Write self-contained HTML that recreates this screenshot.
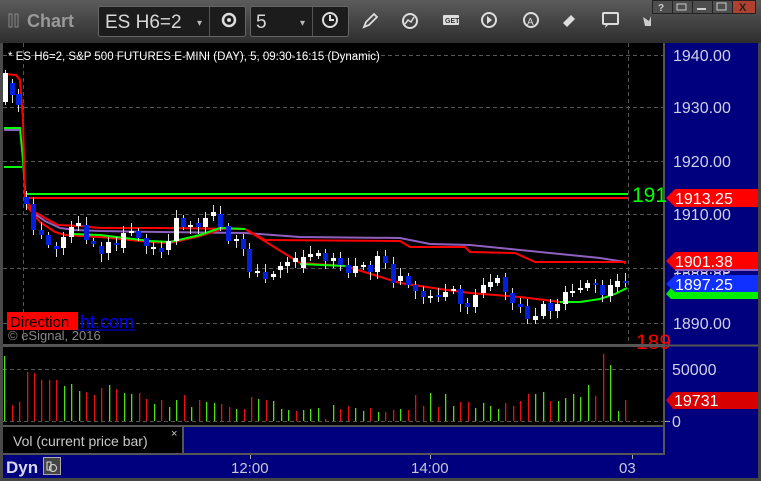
<!DOCTYPE html>
<html><head><meta charset="utf-8"><style>
html,body{margin:0;padding:0;background:#3a3a3a;width:761px;height:481px;overflow:hidden;font-family:"Liberation Sans",sans-serif}
svg{display:block}
</style></head><body>
<svg id="s" width="761" height="481" xmlns="http://www.w3.org/2000/svg" font-family="Liberation Sans, sans-serif">
<defs>
<linearGradient id="tb" x1="0" y1="0" x2="0" y2="1"><stop offset="0" stop-color="#5c5c5c"/><stop offset="0.5" stop-color="#444"/><stop offset="1" stop-color="#2e2e2e"/></linearGradient>
</defs>
<rect x="0" y="0" width="761" height="481" fill="#4a4a4a"/>
<rect x="0" y="0" width="761" height="43" fill="url(#tb)"/>
<rect x="9" y="14" width="3" height="13" fill="none" stroke="#888" stroke-width="1"/>
<rect x="15" y="14" width="3" height="13" fill="none" stroke="#888" stroke-width="1"/>
<text x="27" y="27" font-size="18" font-weight="bold" fill="#9a9a9a">Chart</text>
<rect x="98.5" y="6.5" width="147" height="30" rx="2" fill="#1c1c1c" stroke="#666"/>
<line x1="209.5" y1="7" x2="209.5" y2="36" stroke="#555"/>
<text x="105" y="28" font-size="19" fill="#d8d8d8">ES H6=2</text>
<text x="197" y="26" font-size="10" fill="#bbb">▾</text>
<circle cx="229" cy="20" r="6" fill="none" stroke="#ddd" stroke-width="2.5"/><circle cx="229" cy="20" r="2" fill="#ddd"/>
<rect x="250.5" y="6.5" width="98" height="30" rx="2" fill="#1c1c1c" stroke="#666"/>
<line x1="312.5" y1="7" x2="312.5" y2="36" stroke="#555"/>
<text x="256" y="28" font-size="19" fill="#d8d8d8">5</text>
<text x="300" y="26" font-size="10" fill="#bbb">▾</text>
<circle cx="330" cy="20" r="7" fill="none" stroke="#ddd" stroke-width="2"/><path d="M330 15v5h4" stroke="#ddd" stroke-width="2" fill="none"/>
<path d="M364 27l2-5 8-8 3 3-8 8z" fill="none" stroke="#ddd" stroke-width="1.8"/>
<circle cx="410" cy="21" r="7" fill="none" stroke="#ddd" stroke-width="2"/><path d="M405 24l3-4 3 2 3-5" stroke="#ddd" stroke-width="1.5" fill="none"/>
<rect x="443" y="15" width="16" height="10" rx="1" fill="#ddd"/><text x="445" y="23" font-size="7" font-weight="bold" fill="#333">GET</text>
<circle cx="489" cy="20" r="7" fill="none" stroke="#ddd" stroke-width="2"/><path d="M487 16v8l5-4z" fill="#ddd"/>
<circle cx="531" cy="20" r="7" fill="none" stroke="#ddd" stroke-width="2"/><text x="527" y="25" font-size="10" fill="#ddd">A</text>
<path d="M563 23l8-8 4 4-8 8z" fill="#ddd"/>
<rect x="603" y="13" width="15" height="11" rx="1" fill="none" stroke="#ddd" stroke-width="2"/><path d="M606 24l-1 4 4-4" fill="#ddd"/>
<path d="M643 17l6 4 2-5v10h-6z" fill="#ccc"/>
<rect x="652.5" y="0.5" width="20" height="13" fill="#4e4e4e" stroke="#222"/><text x="658" y="11" font-size="10" font-weight="bold" fill="#ccc">?</text>
<rect x="672.5" y="0.5" width="20" height="13" fill="#4e4e4e" stroke="#222"/><rect x="677" y="4" width="9" height="6" fill="none" stroke="#ccc"/>
<rect x="692.5" y="0.5" width="20" height="13" fill="#4e4e4e" stroke="#222"/><rect x="697" y="8" width="9" height="2" fill="#ccc"/>
<rect x="712.5" y="0.5" width="20" height="13" fill="#4e4e4e" stroke="#222"/><rect x="717" y="3" width="9" height="7" fill="none" stroke="#ccc"/>
<rect x="732.5" y="0.5" width="23" height="13" fill="#b04030" stroke="#222"/><text x="739" y="11" font-size="11" font-weight="bold" fill="#222">X</text>

<rect x="3" y="43" width="662" height="302" fill="#000"/>
<rect x="665" y="43" width="93" height="435" fill="#00007e"/>
<rect x="663" y="43" width="2" height="412" fill="#555"/>
<rect x="3" y="344" width="662" height="3" fill="#555"/>
<rect x="3" y="347" width="660" height="78" fill="#000"/>
<rect x="3" y="425" width="662" height="2" fill="#555"/>
<rect x="3" y="427" width="179" height="27" fill="#000"/>
<rect x="182" y="427" width="2" height="27" fill="#555"/>
<rect x="184" y="427" width="479" height="27" fill="#00007e"/>
<rect x="3" y="453" width="662" height="2" fill="#555"/>
<rect x="3" y="455" width="755" height="23" fill="#00007e"/>
<rect x="0" y="478" width="761" height="3" fill="#444"/>
<rect x="758" y="43" width="3" height="438" fill="#444"/>

<g stroke="#555" stroke-dasharray="4,3" stroke-width="1">
<line x1="3" y1="55.5" x2="663" y2="55.5"/><line x1="3" y1="107.5" x2="663" y2="107.5"/><line x1="3" y1="161.5" x2="663" y2="161.5"/>
<line x1="3" y1="214.5" x2="663" y2="214.5"/><line x1="3" y1="268.5" x2="663" y2="268.5"/><line x1="3" y1="323.5" x2="663" y2="323.5"/>
<line x1="23.5" y1="43" x2="23.5" y2="344"/><line x1="628.5" y1="43" x2="628.5" y2="344"/>
<line x1="3" y1="369.5" x2="663" y2="369.5"/><line x1="3" y1="421.5" x2="663" y2="421.5"/>
</g>

<text x="8" y="60" font-size="11.5" fill="#fff">* ES H6=2, S&amp;P 500 FUTURES E-MINI (DAY), 5, 09:30-16:15 (Dynamic)</text>

<g fill="none" stroke-width="2">
<polyline stroke="#00ff00" points="4,128 20,128 23,160 25,190"/>
<polyline stroke="#9060c0" points="4,130 20,130"/>
<polyline stroke="#00ff00" points="4,167 22,167"/>
<line x1="25" y1="194" x2="628" y2="194" stroke="#00ff00"/>
<line x1="25" y1="198" x2="628" y2="198" stroke="#ff0000"/>
<polyline stroke="#9060c0" points="26,200 35,214 45,221 60,228 75,230 100,231 160,232 245,233 300,237 400,238 430,244 470,245 520,250 560,254 600,258 625,262"/>
<polyline stroke="#ff0000" points="4,74 16,75 20,80 23,120 25,200 35,212 45,218 58,225 80,226 100,228 160,228 245,229 265,240 400,241 410,247 465,247 470,252 515,253 535,262 625,262 625,264"/>
<polyline stroke="#ff0000" points="26,205 40,222 55,232 65,235 100,237 150,242 170,243 200,236 225,228 245,229 300,263 345,266 400,283 440,289 470,293 520,297 545,300 560,302"/>
<polyline stroke="#00ff00" points="73,234 100,235 150,241 170,242 200,235 220,228 245,229"/>
<polyline stroke="#00ff00" points="300,264 345,266"/>
<polyline stroke="#00ff00" points="560,302 580,302 600,299 615,294 627,288"/>
</g>
<g id="candles"></g>
<g id="vol"></g>

<text x="632" y="202" font-size="21" fill="#00ff00">191</text>
<text x="636" y="349" font-size="21" fill="#ff0000">189</text>
<rect x="628" y="344" width="37" height="3" fill="#555"/>

<text x="80" y="328" font-size="18" fill="#0000ff">ht.com</text>
<line x1="78" y1="330" x2="135" y2="330" stroke="#0000ff"/>
<rect x="7" y="312" width="71" height="18" fill="#ff0000"/>
<text x="10" y="327" font-size="15" fill="#000">Direction</text>
<text x="8" y="340" font-size="13" fill="#888">© eSignal, 2016</text>

<g font-size="16" fill="#d0d0e8">
<text x="673" y="61">1940.00</text><text x="673" y="113">1930.00</text><text x="673" y="167">1920.00</text>
<text x="673" y="220">1910.00</text><text x="673" y="274">1900.00</text><text x="673" y="283">1898.25</text><text x="673" y="329">1890.00</text>
<text x="672" y="375">50000</text><text x="672" y="427">0</text>
</g>
<path d="M666 294l5-6h87v11h-87z" fill="#00ee00"/>
<path d="M666 198l9-9h83v18h-83z" fill="#ff0000"/><text x="675" y="204" font-size="16" fill="#fff">1913.25</text>
<path d="M666 261l9-9h83v18h-83z" fill="#ff0000"/><line x1="675" y1="270" x2="758" y2="270" stroke="#9060c0" stroke-width="2"/><text x="675" y="267" font-size="16" fill="#fff">1901.38</text>
<path d="M666 284l9-9h83v17h-83z" fill="#1030ff"/><text x="675" y="290" font-size="16" fill="#fff">1897.25</text>
<path d="M666 400l7-8h85v17h-85z" fill="#d80000"/><text x="674" y="406" font-size="16" fill="#fff">19731</text>
<line x1="665" y1="345.5" x2="758" y2="345.5" stroke="#555" stroke-width="2"/>
<line x1="665" y1="421.5" x2="670" y2="421.5" stroke="#999"/>

<text x="13" y="446" font-size="14" fill="#c8c8c8">Vol (current price bar)</text>
<text x="171" y="437" font-size="11" fill="#ccc">×</text>

<text x="6" y="473" font-size="17" font-weight="bold" fill="#d8d8e8">Dyn</text>
<rect x="43.5" y="457.5" width="17" height="17" fill="#444" stroke="#aaa"/><circle cx="53" cy="468" r="3.5" fill="none" stroke="#ddd"/><rect x="47" y="462" width="4" height="8" fill="none" stroke="#ddd"/>
<g font-size="15" fill="#c8c8d8">
<text x="231" y="473">12:00</text><text x="411" y="473">14:00</text><text x="619" y="473">03</text>
</g>
<g stroke="#aaa"><line x1="250.5" y1="455" x2="250.5" y2="459"/><line x1="430.5" y1="455" x2="430.5" y2="459"/><line x1="632.5" y1="455" x2="632.5" y2="459"/></g>
</svg>
<script>
var C=[[5,73,102,'w'],[12,83,95,'b'],[18,94,105,'b'],[26,197,204,'b'],[33,204,230,'b'],[41,230,235,'b'],[48,235,245,'b'],[56,246,249,'b'],[63,237,248,'w'],[71,227,237,'w'],[78,223,226,'w'],[86,225,240,'b'],[93,241,244,'b'],[101,246,254,'b'],[108,242,253,'w'],[116,243,245,'b'],[123,233,248,'w'],[131,231,232,'w'],[138,231,238,'b'],[146,238,246,'b'],[153,247,248,'w'],[161,248,252,'b'],[168,241,250,'w'],[176,218,241,'w'],[183,218,227,'b'],[190,225,226,'w'],[198,223,227,'b'],[205,218,227,'w'],[213,212,216,'w'],[220,214,227,'b'],[228,226,241,'b'],[236,239,240,'w'],[243,239,249,'b'],[249,249,272,'b'],[257,271,272,'w'],[265,272,279,'b'],[273,274,277,'w'],[280,266,270,'w'],[287,262,266,'w'],[295,258,262,'w'],
[303,257,268,'w'],[310,254,257,'w'],[318,253,256,'w'],[325,253,261,'b'],[333,258,261,'w'],[340,258,265,'b'],[348,265,273,'b'],[355,266,273,'w'],[363,265,267,'w'],[370,265,272,'b'],[377,256,272,'w'],[385,256,263,'b'],[393,264,283,'b'],[400,276,281,'w'],[408,276,285,'b'],[415,285,291,'b'],[423,291,297,'b'],[430,296,297,'w'],[438,295,297,'b'],[445,292,297,'w'],[453,289,291,'w'],[460,289,304,'b'],[467,303,307,'b'],[475,295,307,'w'],[483,285,293,'w'],[490,282,287,'w'],[497,278,283,'w'],[505,277,292,'b'],[512,293,303,'b'],[520,304,307,'b'],[527,306,319,'b'],[535,316,320,'w'],[543,304,316,'w'],[550,303,311,'b'],[557,304,311,'w'],[565,292,304,'w'],[572,291,292,'w'],[580,288,289,'w'],[587,283,288,'w'],[595,283,285,'b'],[602,285,295,'b'],[610,285,296,'w'],[617,281,287,'w'],[625,281,283,'b']];
var h='';C.forEach(function(c,i){var x=c[0],t=c[1],b=c[2];var wt=t-3-(i*7%6),wb=b+3+(i*5%6);
h+='<line x1="'+(x+.5)+'" y1="'+wt+'" x2="'+(x+.5)+'" y2="'+wb+'" stroke="#ddd"/>';
h+='<rect x="'+(x-2)+'" y="'+t+'" width="5" height="'+Math.max(2,b-t)+'" fill="'+(c[3]=='w'?'#fff':'#0020e0')+'"/>';});
document.getElementById('candles').innerHTML=h;
var V=[[4,356,'g'],[12,405,'r'],[19,402,'r'],[27,372,'r'],[34,373,'r'],[41,380,'r'],[49,380,'r'],[56,380,'r'],[64,386,'g'],[71,384,'g'],[79,391,'g'],[86,392,'r'],[94,395,'r'],[101,388,'r'],[109,385,'g'],[116,389,'r'],[124,393,'g'],[131,394,'g'],[139,393,'r'],[146,399,'r'],[154,404,'g'],[161,400,'r'],[169,407,'g'],[176,400,'g'],[184,395,'r'],[191,407,'g'],[199,400,'r'],[206,402,'g'],[214,403,'g'],[221,404,'r'],[229,407,'r'],[236,409,'g'],[244,409,'r'],[251,397,'r'],[258,399,'g'],[266,400,'r'],[273,401,'g'],[281,409,'g'],[288,410,'g'],[296,411,'r'],[303,410,'g'],[310,409,'g'],[318,408,'g'],[325,419,'r'],[333,405,'g'],[340,409,'r'],[348,406,'r'],[355,408,'g'],[363,411,'g'],[370,408,'r'],[378,412,'g'],[385,412,'r'],[393,410,'r'],[400,409,'g'],[408,410,'r'],[415,395,'r'],[423,406,'r'],[430,393,'g'],[438,407,'r'],[445,394,'g'],[453,406,'g'],[460,402,'r'],[468,402,'r'],[475,408,'g'],[483,403,'g'],[490,406,'g'],[498,409,'g'],[505,403,'r'],[513,406,'r'],[520,401,'r'],[528,394,'r'],[535,394,'g'],[543,392,'g'],[550,401,'r'],[558,401,'g'],[565,398,'g'],[573,394,'g'],[580,397,'g'],[588,385,'g'],[595,396,'r'],[603,354,'r'],[610,365,'g'],[618,411,'g'],[625,400,'r']];
var v='';V.forEach(function(a){v+='<rect x="'+a[0]+'" y="'+a[1]+'" width="1.3" height="'+(421-a[1])+'" fill="'+(a[2]=='g'?'#50e010':'#e81010')+'"/>';});
document.getElementById('vol').innerHTML=v;
</script>
</body></html>
